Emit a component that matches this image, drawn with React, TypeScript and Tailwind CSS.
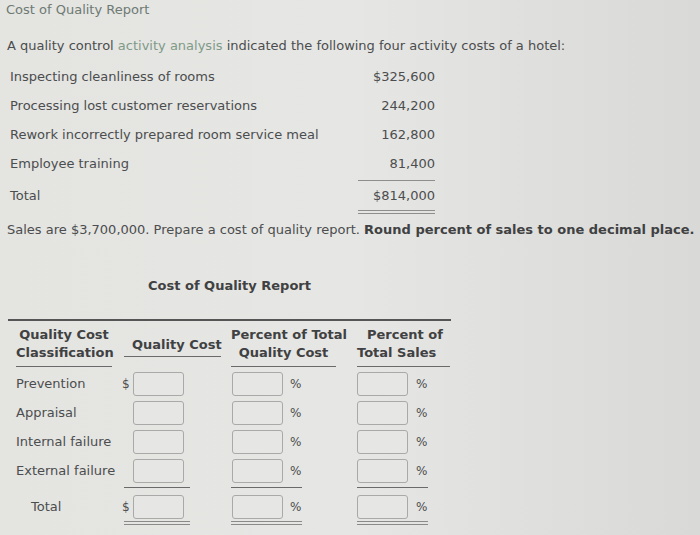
const costs = [
  { label: 'Inspecting cleanliness of rooms', amount: '$325,600' },
  { label: 'Processing lost customer reservations', amount: '244,200' },
  { label: 'Rework incorrectly prepared room service meal', amount: '162,800' },
  { label: 'Employee training', amount: '81,400' },
];

const rows = ['Prevention', 'Appraisal', 'Internal failure', 'External failure'];

function Box() {
  return <div className="h-[24px] w-[51px] rounded-[3px] border-[1.5px] border-[#a9a9a7] bg-[#e6e6e4]" />;
}

function ReportRow({ label, dollar, total }: { label: string; dollar?: boolean; total?: boolean }) {
  return (
    <div className="grid h-[29px] grid-cols-[110px_108px_124px_101px] items-center">
      <div className={total ? 'pl-[23px]' : 'pl-[8px]'}>{label}</div>
      <div className="flex items-center">
        <span className="w-[15px] pl-[4px] text-[12px]">{dollar ? '$' : ''}</span>
        <Box />
      </div>
      <div className="flex items-center pl-[6px]">
        <Box />
        <span className="pl-[7px] text-[12px]">%</span>
      </div>
      <div className="flex items-center pl-[7px]">
        <Box />
        <span className="pl-[8px] text-[12px]">%</span>
      </div>
    </div>
  );
}

export default function App() {
  return (
    <div className="h-[535px] w-[700px] overflow-hidden bg-gradient-to-r from-[#e4e4e1] via-[#e6e6e4] to-[#d9d9d7] font-['DejaVu_Sans',sans-serif] text-[13px] text-[#4b4d4e]">
      <div className="pl-[6px] text-[#6e7a73]">Cost of Quality Report</div>

      <div className="pl-[7px] pt-[16px]">
        A quality control <span className="text-[#7f9a88]">activity analysis</span> indicated the following four activity costs of a hotel:
      </div>

      {/* Activity costs */}
      <div className="w-[435px] pl-[10px] pt-[7px]">
        {costs.map((c) => (
          <div key={c.label} className="flex h-[29px] items-center justify-between">
            <span>{c.label}</span>
            <span>{c.amount}</span>
          </div>
        ))}
        <div className="ml-auto mt-[2px] w-[77px] border-t border-[#8e8e8c]" />
        <div className="flex h-[29px] items-center justify-between">
          <span>Total</span>
          <span>$814,000</span>
        </div>
        <div className="ml-auto w-[77px] border-y border-[#8e8e8c] pt-[2px]" />
      </div>

      <div className="whitespace-nowrap pl-[7px] pt-[6px]">
        Sales are $3,700,000. Prepare a cost of quality report.{' '}
        <span className="font-bold text-[#3f4142]">Round percent of sales to one decimal place.</span>
      </div>

      {/* Report table */}
      <div className="pl-[8px] pt-[36px]">
        <div className="w-[443px]">
          <div className="pb-[24px] text-center font-bold text-[#3f4142]">Cost of Quality Report</div>
          <div className="border-t-2 border-[#555]" />
          <div className="grid grid-cols-[110px_108px_124px_101px] items-end whitespace-nowrap font-bold leading-[18px] text-[#3f4142]">
            <div className="ml-[8px] w-[96px] border-b border-[#6a6a6a] pb-[4px] pt-[5px] text-center">
              Quality Cost
              <br />
              Classification
            </div>
            <div className="mb-[10px] ml-[6px] w-[97px] border-b border-[#6a6a6a] pb-[2px] pl-[8px] pt-[2px] text-center">
              Quality Cost
            </div>
            <div className="ml-[5px] w-[105px] border-b border-[#6a6a6a] pb-[4px] text-center">
              Percent of Total
              <br />
              Quality Cost
            </div>
            <div className="ml-[7px] w-[93px] border-b border-[#6a6a6a] pb-[4px]">
              <div className="pl-[10px]">Percent of</div>
              <div>Total Sales</div>
            </div>
          </div>
          <div className="pt-[2px]">
            {rows.map((r, i) => (
              <ReportRow key={r} label={r} dollar={i === 0} />
            ))}
          </div>
          <div className="grid h-[4px] grid-cols-[110px_108px_124px_101px] items-center">
            <div />
            <div className="ml-[6px] w-[66px] border-t border-[#6a6a6a]" />
            <div className="ml-[5px] w-[71px] border-t border-[#6a6a6a]" />
            <div className="ml-[7px] w-[71px] border-t border-[#6a6a6a]" />
          </div>
          <div className="pt-[3px]">
            <ReportRow label="Total" dollar total />
          </div>
          <div className="grid grid-cols-[110px_108px_124px_101px]">
            <div />
            <div className="ml-[6px] h-[4px] w-[66px] border-y border-[#8a8a8a]" />
            <div className="ml-[5px] h-[4px] w-[71px] border-y border-[#8a8a8a]" />
            <div className="ml-[7px] h-[4px] w-[71px] border-y border-[#8a8a8a]" />
          </div>
        </div>
      </div>
    </div>
  );
}
